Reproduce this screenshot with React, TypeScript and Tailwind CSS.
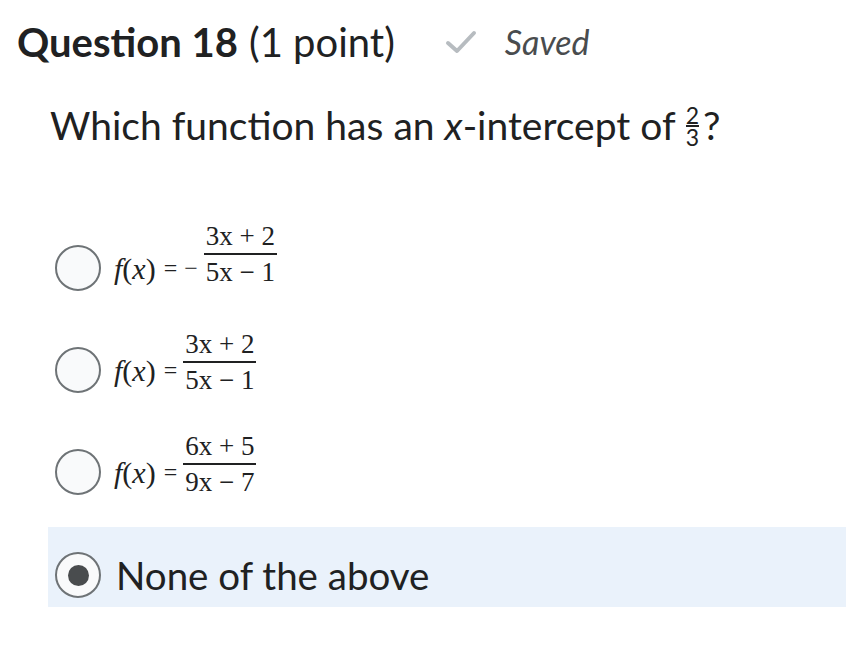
import React from 'react';

type Frac = { num: string; den: string; neg?: boolean; lift: string };

const options: Frac[] = [
  { num: '3x + 2', den: '5x − 1', neg: true, lift: '-translate-y-[14px]' },
  { num: '3x + 2', den: '5x − 1', lift: '-translate-y-[8px]' },
  { num: '6x + 5', den: '9x − 7', lift: '-translate-y-[8px]' },
];

function Radio({ checked }: { checked?: boolean }) {
  return (
    <span className="flex h-[46px] w-[46px] shrink-0 items-center justify-center rounded-full border-2 border-[#6e7376] bg-[#f9fafb]">
      {checked && <span className="h-[21px] w-[21px] rounded-full bg-[#494c4e]" />}
    </span>
  );
}

function MathLine({ num, den, neg, lift }: Frac) {
  return (
    <div
      className="flex items-center text-[#202122]"
      style={{ fontFamily: '"Liberation Serif", serif' }}
    >
      <span className="text-[30px] italic">f</span>
      <span className="text-[30px]">(</span>
      <span className="text-[30px] italic">x</span>
      <span className="text-[30px]">)</span>
      <span className="ml-[8px] text-[24px]">=</span>
      {neg && <span className="ml-[7px] text-[24px]">−</span>}
      <span className={`ml-[6px] flex flex-col items-center text-[27px] leading-[28px] ${lift}`}>
        <span className="px-[2px]">{num}</span>
        <span className="my-[3px] h-[2px] w-full bg-[#202122]" />
        <span className="px-[2px]">{den}</span>
      </span>
    </div>
  );
}

export default function App() {
  return (
    <div
      className="h-[662px] w-[846px] bg-white text-[#202122]"
      style={{ fontFamily: 'Lato, "Noto Sans", sans-serif' }}
    >
      <div className="flex items-center pl-[17px] pt-[18px] leading-[48px]">
        <h1 className="text-[40px] font-bold">Question 18</h1>
        <span className="ml-[11px] text-[40px]">(1 point)</span>
        <svg width="32" height="24" viewBox="0 0 32 24" className="ml-[50px]">
          <path d="M3 13 L12 21 L29 3" fill="none" stroke="#b7bcc0" strokeWidth="4" strokeLinecap="round" strokeLinejoin="round" />
        </svg>
        <span className="ml-[28px] text-[34px] italic text-[#494c4e]">Saved</span>
      </div>

      <div className="mt-[35px] flex h-[48px] items-center pl-[50px] text-[39px] leading-[48px]">
        <span>
          Which function has an <i>x</i>-intercept of
        </span>
        <span className="ml-[10px] mt-[2px] inline-flex flex-col items-center text-[23px] leading-[24px]">
          <span>2</span>
          <span className="-my-[2px] h-[2px] w-[13px] bg-[#202122]" />
          <span>3</span>
        </span>
        <span className="ml-[4px]">?</span>
      </div>

      <div className="mt-[68px] flex flex-col">
        {options.map((o, i) => (
          <div key={i} className="flex h-[102px] items-center gap-[13px] pl-[55px]">
            <Radio />
            <MathLine {...o} />
          </div>
        ))}
        <div className="ml-[48px] mt-[4px] flex h-[80px] items-center gap-[15px] bg-[#eaf2fb] pb-[9px] pl-[7px] pt-[25px]">
          <Radio checked />
          <span className="text-[38.5px] leading-[48px]">None of the above</span>
        </div>
      </div>
    </div>
  );
}
